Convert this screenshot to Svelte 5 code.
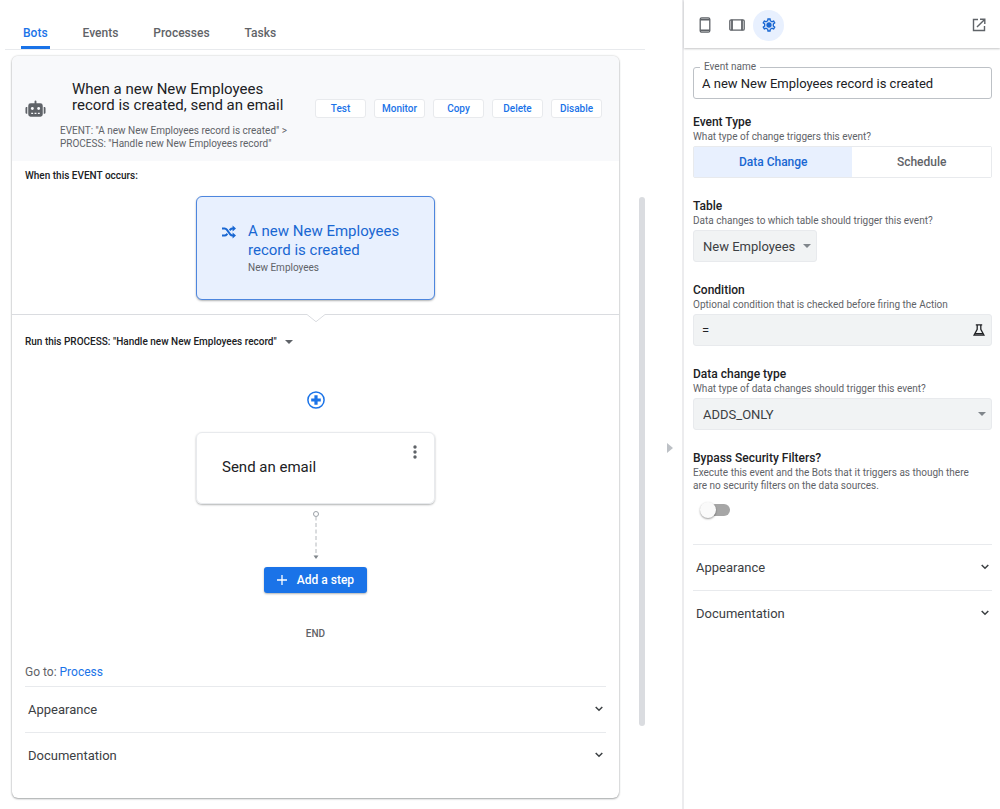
<script>
  const tabs = ['Bots', 'Events', 'Processes', 'Tasks'];
  const actions = ['Test', 'Monitor', 'Copy', 'Delete', 'Disable'];
  const panels = ['Appearance', 'Documentation'];
  const eventTypes = ['Data Change', 'Schedule'];

  let activeTab = 'Bots';
  let eventType = 'Data Change';
  let eventName = 'A new New Employees record is created';
  let table = 'New Employees';
  let condition = '=';
  let changeType = 'ADDS_ONLY';
  let bypassFilters = false;
</script>

<div class="app">
  <main>
    <nav class="tabs">
      {#each tabs as tab}
        <button class="tab" class:active={activeTab === tab} on:click={() => (activeTab = tab)}>{tab}</button>
      {/each}
    </nav>

    <article class="bot">
      <header class="bot-header">
        <svg class="robot" width="21" height="18" viewBox="0 0 22 18">
          <path fill="#5f6368" d="M10 1.2a1 1 0 0 1 2 0V3h4a2.6 2.6 0 0 1 2.6 2.6v9A2.4 2.4 0 0 1 16.200 17H5.800a2.400 2.400 0 0 1-2.400-2.400v-9A2.600 2.600 0 0 1 6 3h4zM.5 8.300c0-.8.6-1.300 1.300-1.300h.6v7h-.6c-.7 0-1.300-.5-1.300-1.300zM19.600 7h.6c.7 0 1.300.5 1.300 1.300v4.400c0 .8-.6 1.300-1.300 1.300h-.6z" />
          <circle cx="7.700" cy="8.500" r="1.500" fill="#f8f9fb" />
          <circle cx="14.300" cy="8.500" r="1.500" fill="#f8f9fb" />
          <path d="M6.500 13.500h2m1.500 0h2m1.500 0h2" stroke="#f8f9fb" stroke-width="1.300" />
        </svg>
        <div class="bot-text">
          <h1>When a new New Employees record is created, send an email</h1>
          <p>EVENT: "A new New Employees record is created" &gt;<br />PROCESS: "Handle new New Employees record"</p>
        </div>
        <div class="actions">
          {#each actions as action}
            <button>{action}</button>
          {/each}
        </div>
      </header>

      <section class="event">
        <h2>When this EVENT occurs:</h2>
        <button class="event-card">
          <svg width="14" height="14" viewBox="0 0 14 14" fill="none" stroke="#1967d2" stroke-width="2">
            <path d="M0 3.500h2.600c1 0 1.600.4 2.200 1.200l3.600 4.800c.6.7 1.200 1 2.100 1h1M0 10.500h2.600c1 0 1.600-.4 2.200-1.200l.5-.7M7.700 5.400l.7-.9c.6-.7 1.200-1 2.100-1h1" />
            <path d="M10.600.5L14 3.500l-3.400 3zM10.600 7.500L14 10.500l-3.400 3z" fill="#1967d2" stroke="none" />
          </svg>
          <span class="event-text">
            <span class="event-title">A new New Employees record is created</span>
            <span class="event-table">New Employees</span>
          </span>
        </button>
      </section>

      <div class="divider">
        <span></span>
        <svg width="18" height="9" viewBox="0 0 18 9" fill="none" stroke="#dadce0">
          <path d="M0 .5L9 7.700 18 .5" />
        </svg>
        <span></span>
      </div>

      <section class="process">
        <h2>
          Run this PROCESS: "Handle new New Employees record"
          <button class="plain" aria-label="Change process">
            <svg width="8" height="4" viewBox="0 0 8 4"><path d="M0 0h8L4 4z" fill="#5f6368" /></svg>
          </button>
        </h2>

        <div class="flow">
          <button class="plain" aria-label="Insert a step">
            <svg width="18" height="18" viewBox="0 0 18 18" fill="none" stroke="#1a73e8">
              <circle cx="9" cy="9" r="8.100" stroke-width="1.500" />
              <path d="M9 4.200v9.600M4.200 9h9.600" stroke-width="3.200" />
            </svg>
          </button>

          <div class="step">
            <span>Send an email</span>
            <button class="plain" aria-label="Step menu">
              <svg width="4" height="14" viewBox="0 0 4 14" fill="#5f6368">
                <circle cx="2" cy="2" r="1.700" /><circle cx="2" cy="7" r="1.700" /><circle cx="2" cy="12" r="1.700" />
              </svg>
            </button>
          </div>

          <svg width="8" height="50" viewBox="0 0 8 50" fill="none" stroke="#9aa0a6">
            <circle cx="4" cy="4" r="2.500" />
            <path d="M4 6.500V46" stroke="#b4b8bc" stroke-dasharray="4 2.500" />
            <path d="M1.500 45.500h5L4 49z" fill="#80868b" stroke="none" />
          </svg>

          <button class="add">
            <svg width="10" height="10" viewBox="0 0 10 10" stroke="#fff" stroke-width="1.300"><path d="M5 0v10M0 5h10" /></svg>
            Add a step
          </button>

          <div class="end">END</div>
        </div>

        <p class="goto">Go to: <a href="#process">Process</a></p>

        {#each panels as panel}
          <button class="panel">
            {panel}
            <svg width="8" height="6" viewBox="0 0 8 6" fill="none" stroke="#3c4043" stroke-width="1.500"><path d="M.7 1L4 4.300 7.300 1" /></svg>
          </button>
        {/each}
      </section>
    </article>
  </main>

  <div class="scrollbar"><div></div></div>

  <div class="collapse">
    <button class="plain" aria-label="Hide side panel">
      <svg width="6" height="10" viewBox="0 0 6 10"><path d="M0 0l6 5-6 5z" fill="#bdc1c6" /></svg>
    </button>
  </div>

  <aside>
    <header class="toolbar">
      <button class="tool phone" aria-label="Phone preview">
        <svg width="12" height="16" viewBox="0 0 12 16" fill="none" stroke="#5f6368" stroke-width="1.300">
          <rect x="1.200" y=".8" width="9.600" height="14.400" rx="1.500" />
          <path d="M1.200 2.600h9.600M1.200 13.400h9.600" stroke-width="1.800" />
        </svg>
      </button>
      <button class="tool" aria-label="Tablet preview">
        <svg width="16" height="12" viewBox="0 0 16 12" fill="none" stroke="#5f6368" stroke-width="1.300">
          <rect x=".8" y=".8" width="14.400" height="10.400" rx="1.300" />
          <path d="M3 .8v10.400M13 .8v10.400" stroke-width="1.800" />
        </svg>
      </button>
      <button class="tool selected" aria-label="Settings">
        <svg width="16" height="16" viewBox="0 0 24 24" fill="#1967d2">
          <path d="M19.430 12.980c.04-.32.07-.64.07-.98 0-.34-.03-.66-.07-.98l2.110-1.650c.19-.15.24-.42.12-.64l-2-3.460c-.09-.16-.26-.25-.44-.25-.06 0-.12.010-.17.030l-2.490 1c-.52-.4-1.080-.73-1.690-.98l-.38-2.650C14.460 2.180 14.250 2 14 2h-4c-.25 0-.46.18-.49.420l-.38 2.650c-.61.250-1.170.590-1.690.980l-2.490-1c-.06-.02-.12-.03-.18-.03-.17 0-.34.090-.43.250l-2 3.460c-.13.220-.07.490.12.640l2.110 1.650c-.04.320-.07.650-.07.980s.030.660.070.980l-2.110 1.650c-.19.150-.24.420-.12.640l2 3.460c.09.160.26.250.44.250.06 0 .12-.01.170-.03l2.490-1c.52.400 1.080.730 1.690.980l.38 2.650c.03.240.24.420.49.420h4c.25 0 .46-.18.49-.42l.38-2.650c.61-.25 1.170-.59 1.690-.98l2.490 1c.06.020.12.030.18.030.17 0 .34-.09.43-.25l2-3.460c.12-.22.070-.49-.12-.64l-2.110-1.650zm-1.980-1.710c.04.310.05.520.05.730 0 .21-.02.430-.05.730l-.14 1.130.89.700 1.080.84-.7 1.210-1.270-.51-1.040-.42-.9.680c-.43.320-.84.560-1.250.730l-1.060.43-.16 1.130-.2 1.350h-1.400l-.19-1.350-.16-1.130-1.060-.43c-.43-.18-.83-.41-1.230-.71l-.91-.7-1.060.43-1.270.51-.7-1.210 1.080-.84.89-.7-.14-1.130c-.03-.31-.05-.54-.05-.74s.02-.43.05-.73l.14-1.130-.89-.7-1.080-.84.7-1.210 1.270.51 1.040.42.9-.68c.43-.32.84-.56 1.250-.73l1.060-.43.16-1.130.2-1.350h1.390l.19 1.350.16 1.130 1.060.43c.43.180.83.410 1.230.710l.91.700 1.060-.43 1.270-.51.7 1.210-1.070.85-.89.700.14 1.130z" />
          <circle cx="12" cy="12" r="4" />
        </svg>
      </button>
      <button class="tool open" aria-label="Open in new window">
        <svg width="14" height="14" viewBox="0 0 14 14" fill="none" stroke="#5f6368" stroke-width="1.400">
          <path d="M6 1.500H1.500v11h11V8M8 1.200h4.800V6M12.600 1.400L5 9" />
        </svg>
      </button>
    </header>

    <div class="settings">
      <div class="name-field">
        <label for="event-name">Event name</label>
        <input id="event-name" type="text" bind:value={eventName} />
      </div>

      <div class="group">
        <h3>Event Type</h3>
        <p>What type of change triggers this event?</p>
        <div class="toggle">
          {#each eventTypes as type}
            <button class:on={eventType === type} on:click={() => (eventType = type)}>{type}</button>
          {/each}
        </div>
      </div>

      <div class="group">
        <label for="table">Table</label>
        <p>Data changes to which table should trigger this event?</p>
        <div class="select fit">
          <select id="table" bind:value={table}><option>New Employees</option></select>
          <svg width="8" height="4" viewBox="0 0 8 4"><path d="M0 0h8L4 4z" fill="#80868b" /></svg>
        </div>
      </div>

      <div class="group">
        <label for="condition">Condition</label>
        <p>Optional condition that is checked before firing the Action</p>
        <div class="condition">
          <input id="condition" type="text" bind:value={condition} />
          <button class="plain" aria-label="Edit expression">
            <svg width="12" height="12" viewBox="0 0 12 12" fill="none" stroke="#202124" stroke-width="1.300">
              <path d="M2.800.8h6.400M4.200.8v4.600L1 11.200h10L7.800 5.400V.8M2 9.600h8" />
            </svg>
          </button>
        </div>
      </div>

      <div class="group">
        <label for="change-type">Data change type</label>
        <p>What type of data changes should trigger this event?</p>
        <div class="select">
          <select id="change-type" bind:value={changeType}><option>ADDS_ONLY</option></select>
          <svg width="8" height="4" viewBox="0 0 8 4"><path d="M0 0h8L4 4z" fill="#80868b" /></svg>
        </div>
      </div>

      <div class="group">
        <label for="bypass">Bypass Security Filters?</label>
        <p>Execute this event and the Bots that it triggers as though there are no security filters on the data sources.</p>
        <input id="bypass" class="switch" type="checkbox" bind:checked={bypassFilters} />
      </div>

      {#each panels as panel}
        <button class="panel">
          {panel}
          <svg width="8" height="6" viewBox="0 0 8 6" fill="none" stroke="#3c4043" stroke-width="1.500"><path d="M.7 1L4 4.300 7.300 1" /></svg>
        </button>
      {/each}
    </div>
  </aside>
</div>

<style>
  :global(body) {
    margin: 0;
    background: #fff;
  }

  .app {
    display: flex;
    min-height: 100vh;
    font-family: Roboto, "Liberation Sans", sans-serif;
    color: #202124;
  }

  .app *,
  .app *::before {
    box-sizing: border-box;
  }

  h1, h2, h3, p {
    margin: 0;
  }

  button, input, select {
    font-family: inherit;
    color: inherit;
    margin: 0;
    cursor: pointer;
  }

  svg {
    display: block;
    flex: none;
  }

  .plain {
    display: block;
    padding: 0;
    border: none;
    background: none;
  }

  main {
    flex: 1;
    min-width: 0;
    padding-left: 5px;
  }

  .tabs {
    display: flex;
    gap: 31px;
    height: 50px;
    padding: 0 16px;
    margin-right: -6px;
    border-bottom: 1px solid #e8eaed;
  }

  .tab {
    padding: 20px 2px 0;
    border: none;
    border-bottom: 3px solid transparent;
    background: none;
    font-size: 12px;
    font-weight: 500;
    line-height: 12px;
    color: #5f6368;
  }

  .tab.active {
    color: #1a73e8;
    border-bottom-color: #1a73e8;
  }

  .bot {
    margin: 6px 20px 11px 7px;
    border-radius: 6px;
    overflow: hidden;
    box-shadow: 0 0 2px rgba(60, 64, 67, 0.3), 0 1px 2px rgba(60, 64, 67, 0.4);
  }

  .bot-header {
    display: flex;
    align-items: center;
    height: 105px;
    padding: 0 17px 0 13px;
    background: #f8f9fb;
  }

  .bot-text {
    flex: 1;
    min-width: 0;
    padding: 14px 0 0 14px;
  }

  .bot-text h1 {
    max-width: 232px;
    padding-left: 12px;
    font-size: 15px;
    font-weight: 400;
    line-height: 16px;
  }

  .bot-text p {
    margin-top: 11px;
    font-size: 10px;
    line-height: 13px;
    color: #5f6368;
    white-space: nowrap;
  }

  .actions {
    display: flex;
    gap: 8px;
  }

  .actions button {
    width: 51px;
    height: 19px;
    padding: 0;
    border: 1px solid #e8eaed;
    border-radius: 3px;
    background: #fff;
    font-size: 10px;
    font-weight: 500;
    color: #1a73e8;
  }

  h2 {
    display: flex;
    align-items: center;
    gap: 8px;
    font-size: 10px;
    font-weight: 500;
    line-height: 12px;
  }

  .event {
    padding: 9px 13px 14px;
  }

  .event-card {
    display: flex;
    gap: 12px;
    width: 239px;
    height: 104px;
    margin: 14px auto 0;
    padding: 25px 25px 0;
    border: 1px solid #4d86de;
    border-radius: 6px;
    background: #e8f0fe;
    box-shadow: 0 1px 2px rgba(60, 64, 67, 0.4);
    text-align: left;
  }

  .event-card svg {
    margin-top: 3px;
  }

  .event-text,
  .event-title,
  .event-table {
    display: block;
  }

  .event-title {
    font-size: 15px;
    line-height: 19px;
    color: #1967d2;
  }

  .event-table {
    font-size: 10px;
    line-height: 15px;
    color: #5f6368;
  }

  .divider {
    display: flex;
  }

  .divider span {
    flex: 1;
    border-top: 1px solid #dadce0;
  }

  .process {
    padding: 13px 13px 20px;
  }

  .flow {
    display: flex;
    flex-direction: column;
    align-items: center;
    padding-top: 43px;
  }

  .step {
    display: flex;
    justify-content: space-between;
    width: 239px;
    height: 72px;
    margin: 23px 0 6px;
    padding: 12px 17px 0 25px;
    border: 1px solid #e8eaed;
    border-radius: 6px;
    box-shadow: 0 1px 2px rgba(60, 64, 67, 0.4);
    font-size: 15px;
    line-height: 44px;
  }

  .step button {
    align-self: flex-start;
  }

  .add {
    display: flex;
    align-items: center;
    gap: 10px;
    height: 26px;
    margin-top: 7px;
    padding: 0 13px;
    border: none;
    border-radius: 3px;
    background: #1a73e8;
    box-shadow: 0 1px 2px rgba(60, 64, 67, 0.4);
    font-size: 12px;
    font-weight: 500;
    color: #fff;
  }

  .end {
    margin-top: 35px;
    font-size: 10px;
    font-weight: 500;
    line-height: 12px;
    color: #5f6368;
  }

  .goto {
    margin-top: 24px;
    padding-bottom: 6px;
    font-size: 12px;
    line-height: 16px;
    color: #5f6368;
  }

  .goto a {
    color: #1a73e8;
    text-decoration: none;
  }

  .panel {
    display: flex;
    align-items: center;
    justify-content: space-between;
    width: 100%;
    height: 46px;
    padding: 0 3px 1px;
    border: none;
    border-top: 1px solid #e8eaed;
    background: none;
    font-size: 13px;
    color: #3c4043;
  }

  .scrollbar {
    display: flex;
    flex: none;
    width: 6px;
    padding: 197px 0 83px;
  }

  .scrollbar div {
    width: 6px;
    border-radius: 3px;
    background: #dadce0;
  }

  .collapse {
    flex: none;
    width: 37px;
    padding: 443px 0 0 22px;
  }

  aside {
    flex: none;
    width: 318px;
    border-left: 2px solid #ececee;
  }

  .toolbar {
    display: flex;
    align-items: center;
    height: 48px;
    padding: 2px 14px 0 15px;
    box-shadow: 0 1px 2px rgba(60, 64, 67, 0.3);
  }

  .tool {
    display: grid;
    place-items: center;
    height: 31px;
    padding: 0;
    border: none;
    border-radius: 16px;
    background: none;
  }

  .phone {
    margin-right: 18px;
  }

  .selected {
    width: 31px;
    margin-left: 8px;
    background: #e8f0fe;
  }

  .open {
    margin-left: auto;
  }

  .settings {
    padding: 19px 8px 19px 9px;
  }

  .name-field {
    position: relative;
    margin-bottom: 15px;
  }

  .name-field label {
    position: absolute;
    top: -6px;
    left: 7px;
    padding: 0 4px;
    background: #fff;
    font-size: 10px;
    line-height: 12px;
    color: #5f6368;
  }

  .name-field input {
    display: block;
    width: 100%;
    height: 32px;
    padding: 0 8px;
    border: 1px solid #bdc1c6;
    border-radius: 3px;
    background: none;
    font-size: 13px;
  }

  .group {
    margin-bottom: 20px;
  }

  .group label,
  .group h3 {
    display: block;
    font-size: 12px;
    font-weight: 500;
    line-height: 16px;
  }

  .group p {
    max-width: 290px;
    margin-bottom: 3px;
    font-size: 10px;
    line-height: 13px;
    color: #5f6368;
  }

  .toggle {
    display: grid;
    grid-template-columns: 8fr 7fr;
    height: 32px;
    border: 1px solid #e8eaed;
    border-radius: 2px;
  }

  .toggle button {
    padding: 0;
    border: none;
    background: #fff;
    font-size: 12px;
    font-weight: 500;
    color: #5f6368;
  }

  .toggle .on {
    background: #e8f0fe;
    color: #1967d2;
  }

  .select {
    display: grid;
    align-items: center;
    justify-items: end;
  }

  .select.fit {
    width: fit-content;
  }

  .select select,
  .select svg {
    grid-area: 1 / 1;
  }

  .select svg {
    margin-right: 6px;
    pointer-events: none;
  }

  select {
    appearance: none;
    width: 100%;
    height: 32px;
    padding: 0 20px 0 9px;
    border: 1px solid #e8eaed;
    border-radius: 3px;
    background: #f1f3f4;
    font-size: 13px;
    color: #3c4043;
  }

  .condition {
    display: flex;
    align-items: center;
    height: 32px;
    padding: 0 6px 0 8px;
    border: 1px solid #e8eaed;
    border-radius: 3px;
    background: #f1f3f4;
  }

  .condition input {
    flex: 1;
    min-width: 0;
    padding: 0;
    border: none;
    background: none;
    font-size: 13px;
  }

  .switch {
    display: flex;
    align-items: center;
    appearance: none;
    width: 28px;
    height: 12px;
    margin: 12px 0 28px 9px;
    border-radius: 6px;
    background: #a6a6a6;
  }

  .switch::before {
    content: '';
    flex: none;
    width: 16px;
    height: 16px;
    margin-left: -2px;
    border-radius: 50%;
    background: #fafafa;
    box-shadow: 0 1px 2px rgba(0, 0, 0, 0.4);
  }

  .switch:checked {
    justify-content: flex-end;
    background: #8ab4f8;
  }
</style>
